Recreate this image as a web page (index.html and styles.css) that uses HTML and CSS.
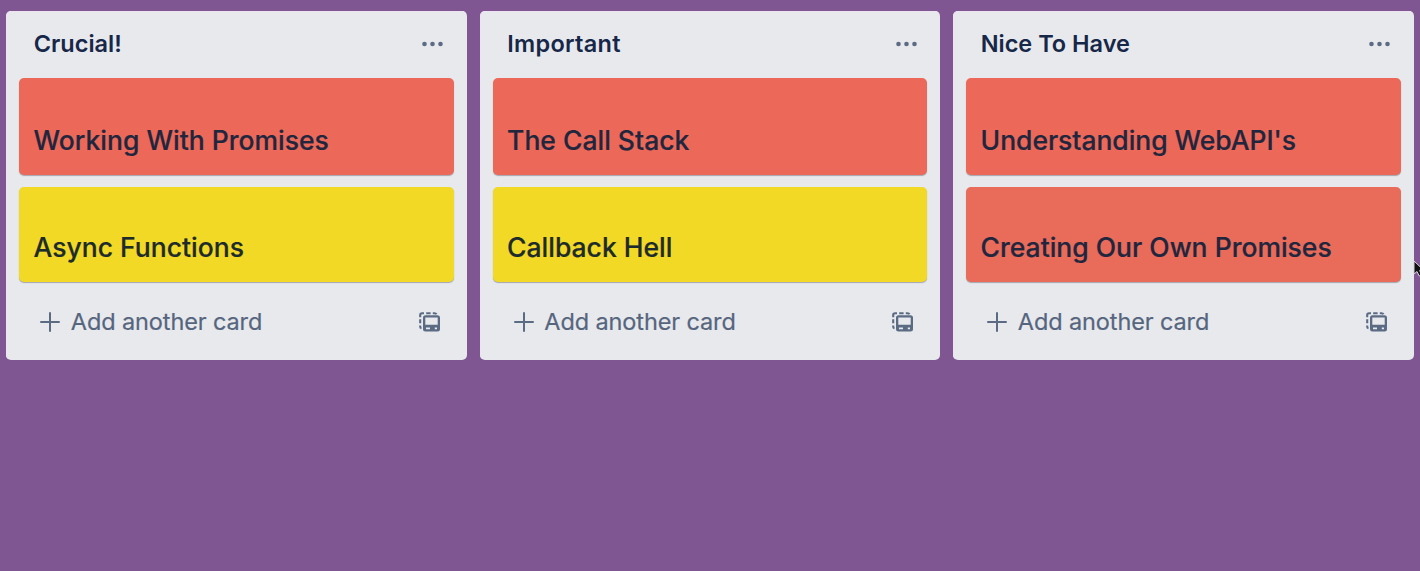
FILE: index.html
```html
<!DOCTYPE html>
<html lang="en">
<head>
<meta charset="utf-8">
<title>Board</title>
<link rel="stylesheet" href="styles.css">
</head>
<body>
<svg class="defs" aria-hidden="true">
  <symbol id="dots" viewBox="0 0 22 6"><circle cx="2.5" cy="3" r="2.3"/><circle cx="10.5" cy="3" r="2.3"/><circle cx="18.5" cy="3" r="2.3"/></symbol>
  <symbol id="plus" viewBox="0 0 20 20"><path d="M1 10H19M10 1V19" fill="none" stroke="currentColor" stroke-width="2" stroke-linecap="round"/></symbol>
  <symbol id="template" viewBox="0 0 22 20">
    <path d="M1.2 5.2V3Q1.2 1.2 3 1.2H5M7.2 1.2H11.6M13.8 1.2H15.5Q17 1.2 17.5 2.3M1.2 7.3V11.2M1.2 13.4V14.7Q1.2 16 2.5 16.2" fill="none" stroke="currentColor" stroke-width="2.1"/>
    <path fill-rule="evenodd" d="M6.5 3.3H18.5Q21 3.3 21 5.8V17Q21 19.5 18.5 19.5H6.5Q4 19.5 4 17V5.8Q4 3.3 6.5 3.3ZM6.3 5.6V12.8H18.7V5.6ZM7 15.4V17.2H11V15.4ZM15.8 15.4V17.2H18V15.4Z"/>
  </symbol>
</svg>
<main class="board">
  <section class="list">
    <header class="list-header"><h2 class="list-title">Crucial!</h2><svg class="icon menu"><use href="#dots"/></svg></header>
    <div class="cards">
      <article class="card red"><span>Working With Promises</span></article>
      <article class="card yellow short"><span>Async Functions</span></article>
    </div>
    <footer class="list-footer"><svg class="icon plus"><use href="#plus"/></svg><span class="add">Add another card</span><svg class="icon template"><use href="#template"/></svg></footer>
  </section>
  <section class="list">
    <header class="list-header"><h2 class="list-title spaced">Important</h2><svg class="icon menu"><use href="#dots"/></svg></header>
    <div class="cards">
      <article class="card red"><span>The Call Stack</span></article>
      <article class="card yellow short"><span>Callback Hell</span></article>
    </div>
    <footer class="list-footer"><svg class="icon plus"><use href="#plus"/></svg><span class="add">Add another card</span><svg class="icon template"><use href="#template"/></svg></footer>
  </section>
  <section class="list">
    <header class="list-header"><h2 class="list-title">Nice To Have</h2><svg class="icon menu"><use href="#dots"/></svg></header>
    <div class="cards">
      <article class="card red"><span class="tight">Understanding WebAPI's</span></article>
      <article class="card coral short"><span>Creating Our Own Promises</span></article>
    </div>
    <footer class="list-footer"><svg class="icon plus"><use href="#plus"/></svg><span class="add">Add another card</span><svg class="icon template"><use href="#template"/></svg></footer>
  </section>
</main>
<svg class="cursor" viewBox="0 0 12 18"><path d="M1 1V14L4 11.5L6.2 16L8.6 15L6.7 10.5H11Z" fill="#111" stroke="#d8d0dc" stroke-width="1"/></svg>
</body>
</html>
```
FILE: styles.css
```css
* { box-sizing: border-box; }
body { margin: 0; height: 571px; overflow: hidden; background: #7f5692; font-family: Inter, "Liberation Sans", sans-serif; }
.defs { position: absolute; width: 0; height: 0; }
.board { display: flex; align-items: flex-start; gap: 13px; padding: 11px 0 0 6px; }
.list { flex: none; width: 460.5px; height: 349px; padding: 0 13px; border-radius: 5px; background: #e7e9ed; box-shadow: inset 1px 1px 0 #eee3f2; }
.list-header { display: flex; align-items: center; justify-content: space-between; height: 67.4px; padding: 0 9.2px 1px 14.7px; }
.list-title { margin: 0; color: #172748; font-size: 23.5px; font-weight: 600; line-height: 30px; white-space: nowrap; }
.spaced { letter-spacing: 0.3px; }
.icon { flex: none; color: #5c6b84; fill: currentColor; }
.menu { width: 22px; height: 6px; }
.cards { display: flex; flex-direction: column; gap: 12.5px; }
.card { display: flex; align-items: flex-end; height: 96.5px; padding: 0 15px 18px 14.6px; border-radius: 5px; box-shadow: 0 1px 1px #a3a5ad; color: #20263e; font-size: 26.5px; font-weight: 500; line-height: 34px; white-space: nowrap; -webkit-text-stroke: 0.2px currentColor; }
.short { height: 94.5px; }
.red { background: #ec6959; }
.coral { background: #e96b5a; }
.yellow { background: #f2d925; color: #1d2b2c; }
.tight { letter-spacing: -0.05px; }
.list-footer { display: flex; align-items: center; height: 80.2px; padding: 0 12.7px 0 21px; color: #56657e; font-size: 23.5px; line-height: 30px; }
.add { letter-spacing: -0.11px; -webkit-text-stroke: 0.2px currentColor; }
.plus { width: 20px; height: 20px; margin-right: 10.8px; }
.template { width: 22px; height: 20px; margin-left: auto; }
.cursor { position: absolute; left: 1413px; top: 260px; width: 12px; height: 18px; }
```
